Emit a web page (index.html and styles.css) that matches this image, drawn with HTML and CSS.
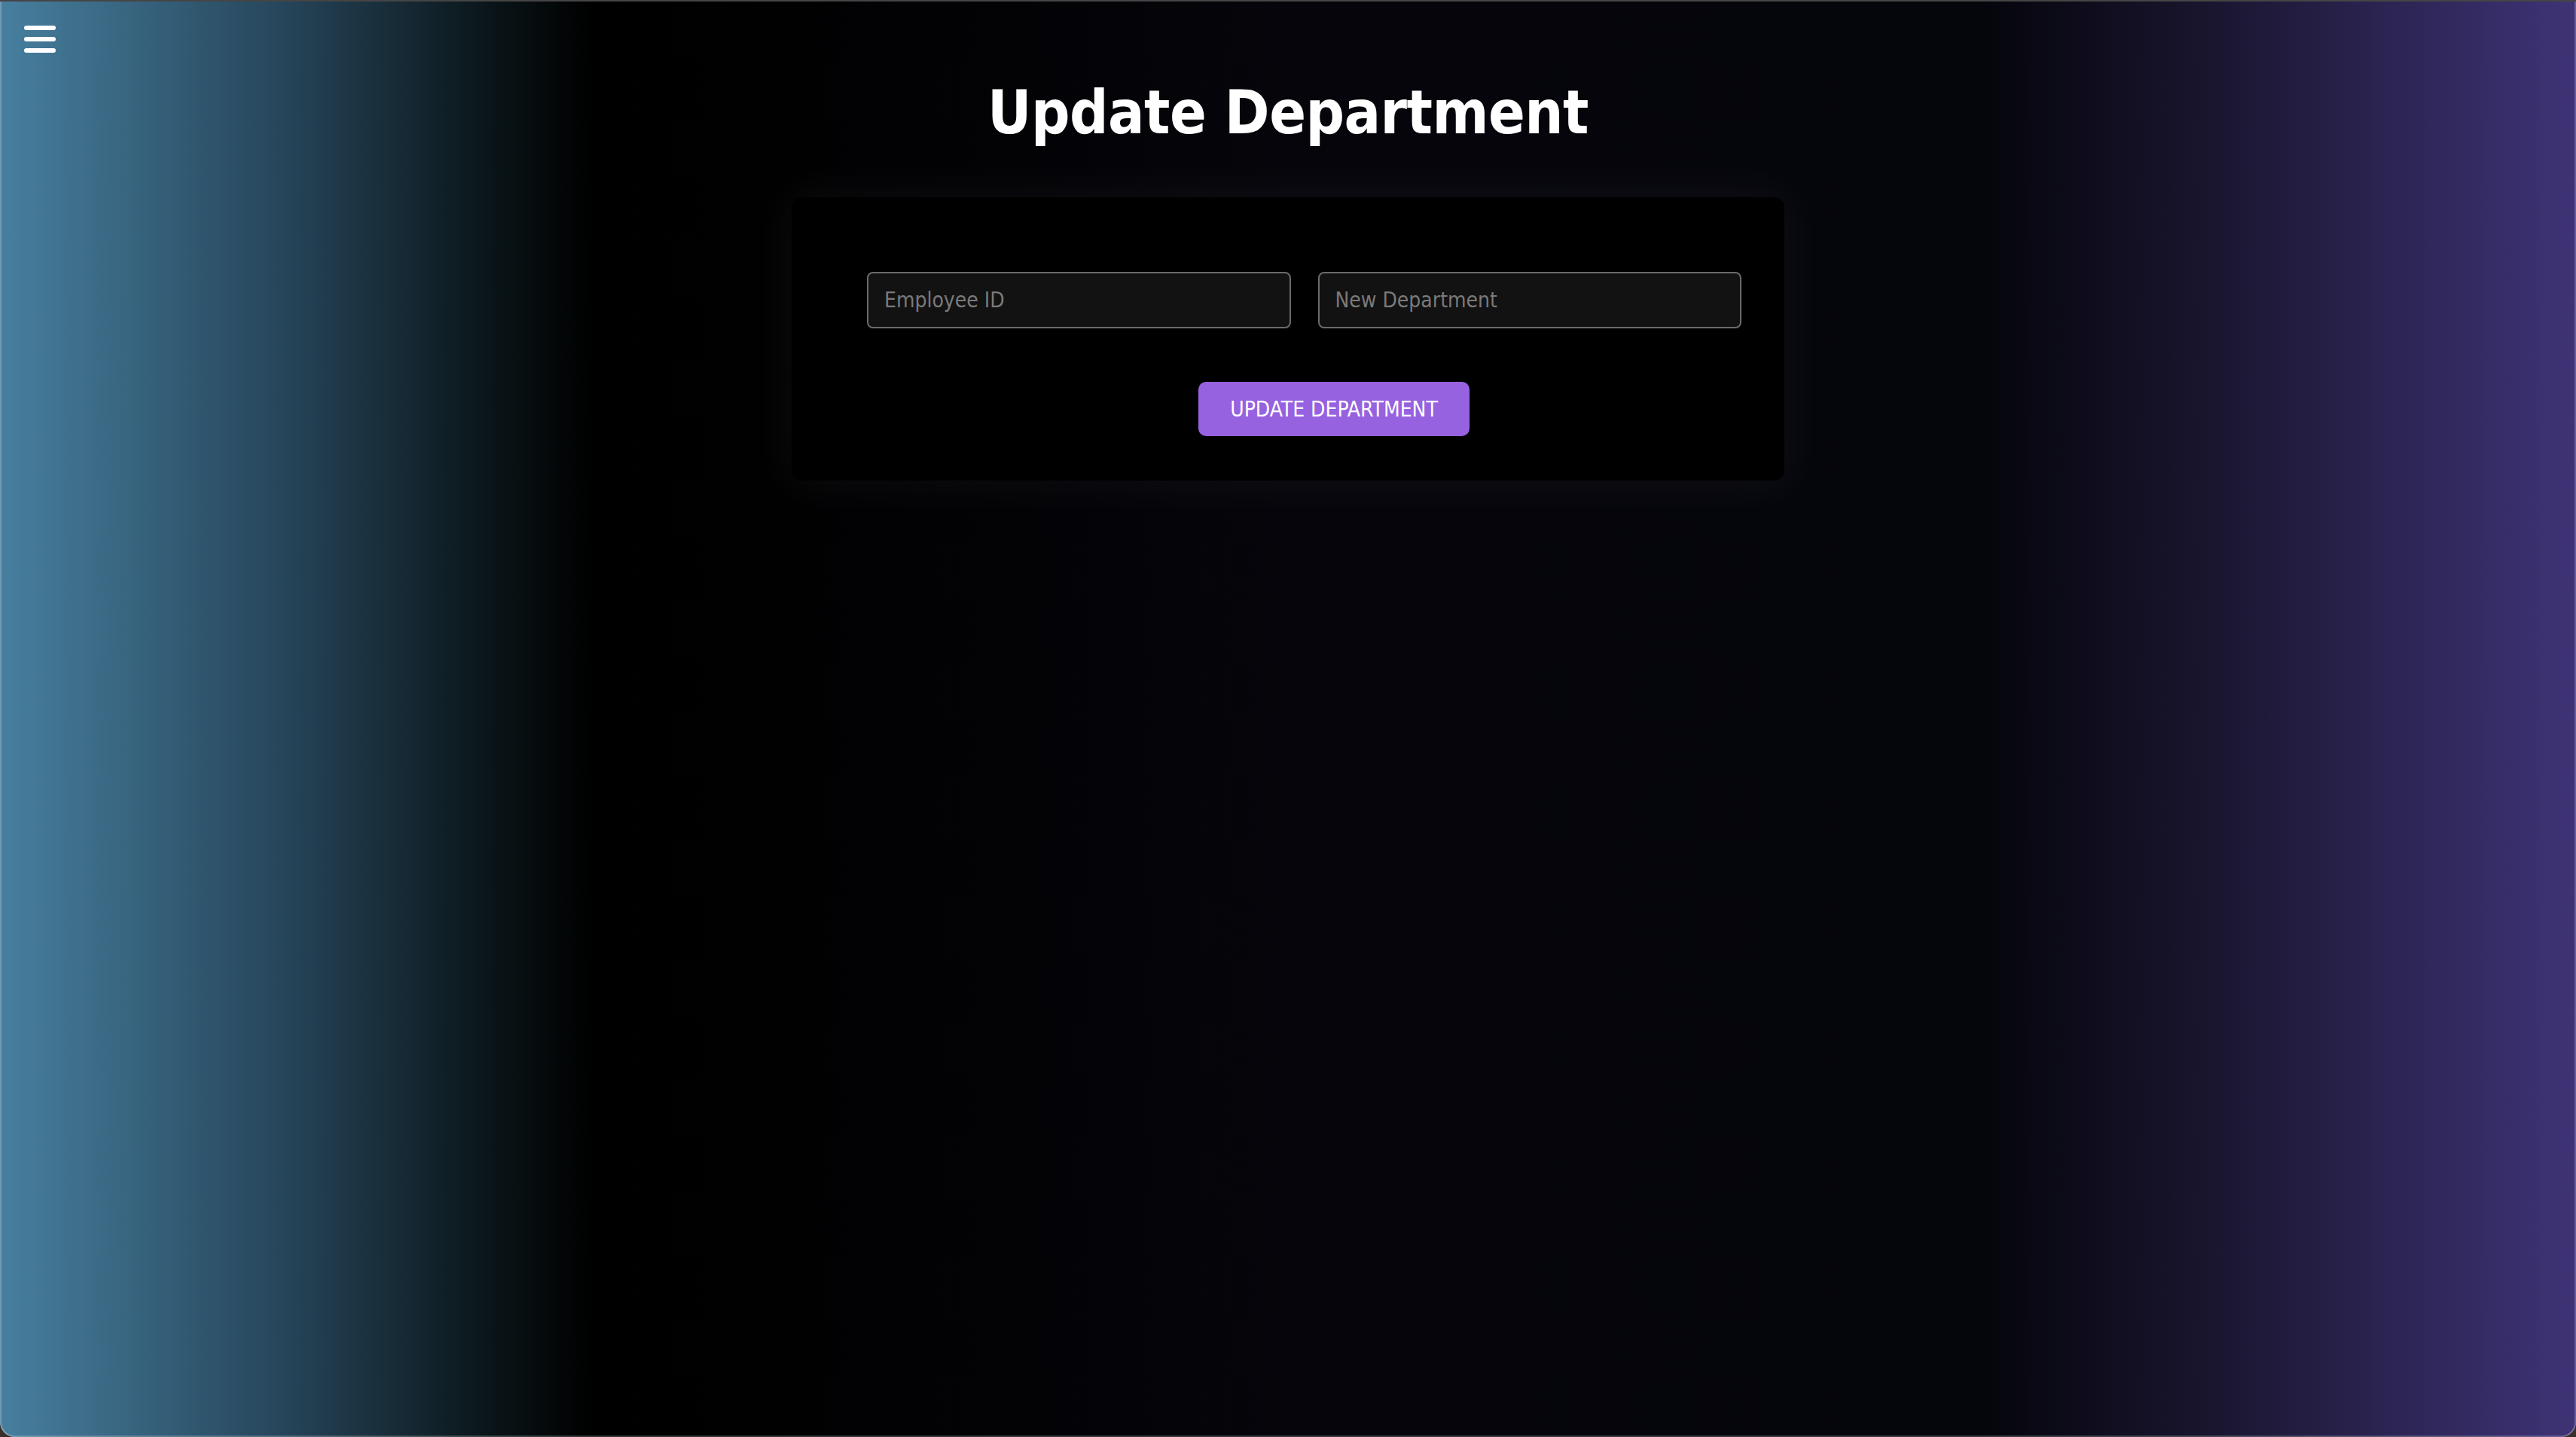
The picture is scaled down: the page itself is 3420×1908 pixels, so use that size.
FILE: index.html
```html
<!DOCTYPE html>
<html lang="en">
<head>
<meta charset="utf-8">
<title>Update Department</title>
<link rel="stylesheet" href="styles.css">
</head>
<body>
<div class="window">
  <header class="topbar">
    <button class="menu" aria-label="Menu">
      <span class="bar"></span>
      <span class="bar"></span>
      <span class="bar"></span>
    </button>
  </header>
  <main class="content">
    <h1 class="title">Update Department</h1>
    <form class="card">
      <div class="fields">
        <input class="field" type="text" placeholder="Employee ID">
        <input class="field" type="text" placeholder="New Department">
      </div>
      <div class="actions">
        <button class="submit" type="button">UPDATE DEPARTMENT</button>
      </div>
    </form>
  </main>
</div>
</body>
</html>
```

FILE: styles.css
```css
html, body {
  margin: 0;
  padding: 0;
  height: 100%;
  background: #3a2f2a;
}

body {
  font-family: "DejaVu Sans Condensed", "DejaVu Sans", Verdana, sans-serif;
}

.window {
  box-sizing: border-box;
  height: 1908px;
  border-top: 2px solid #454545;
  border-radius: 0 0 20px 20px;
  background: linear-gradient(90deg, #477f9f 0%, #26455a 11%, #0a1519 19%, #000 23%, #010102 30%, #05050b 50%, #05050c 77%, #1a1630 86%, #3f3377 100%);
  box-shadow: inset 2px 0 0 rgba(255,255,255,0.22), inset -2px 0 0 rgba(255,255,255,0.22), inset 0 -2px 0 rgba(255,255,255,0.22);
  position: relative;
  overflow: hidden;
}

.topbar {
  padding: 32px 0 0 32px;
  height: 0;
}

.menu {
  display: flex;
  flex-direction: column;
  gap: 9px;
  padding: 0;
  border: 0;
  background: none;
  cursor: pointer;
}

.bar {
  display: block;
  width: 42px;
  height: 6px;
  border-radius: 3px;
  background: #ffffff;
}

.content {
  display: flex;
  flex-direction: column;
  align-items: center;
}

.title {
  margin: 66px 0 0 0;
  font-size: 80px;
  line-height: 100px;
  font-weight: bold;
  color: #ffffff;
  letter-spacing: -0.5px;
}

.card {
  box-sizing: border-box;
  width: 1318px;
  margin-top: 62px;
  padding: 99px 57px 59px 100px;
  background: #000;
  border-radius: 14px;
  box-shadow: 0 0 60px 10px rgba(255,255,255,0.045);
}

.fields {
  display: flex;
  gap: 36px;
}

.field {
  box-sizing: border-box;
  width: 563px;
  height: 75px;
  padding: 0 21px;
  background: #121212;
  border: 2px solid #6a6a6a;
  border-radius: 8px;
  color: #ddd;
  font-family: "DejaVu Sans Condensed", "DejaVu Sans", Verdana, sans-serif;
  font-size: 28px;
  outline: none;
}

.field::placeholder {
  color: #7a7a7a;
}

.actions {
  display: flex;
  padding-left: 440px;
  margin-top: 71px;
}

.submit {
  width: 360px;
  height: 72px;
  border: 0;
  border-radius: 10px;
  background: #9762e0;
  color: #ffffff;
  font-family: "DejaVu Sans Condensed", "DejaVu Sans", Verdana, sans-serif;
  font-size: 28px;
  cursor: pointer;
}
```
